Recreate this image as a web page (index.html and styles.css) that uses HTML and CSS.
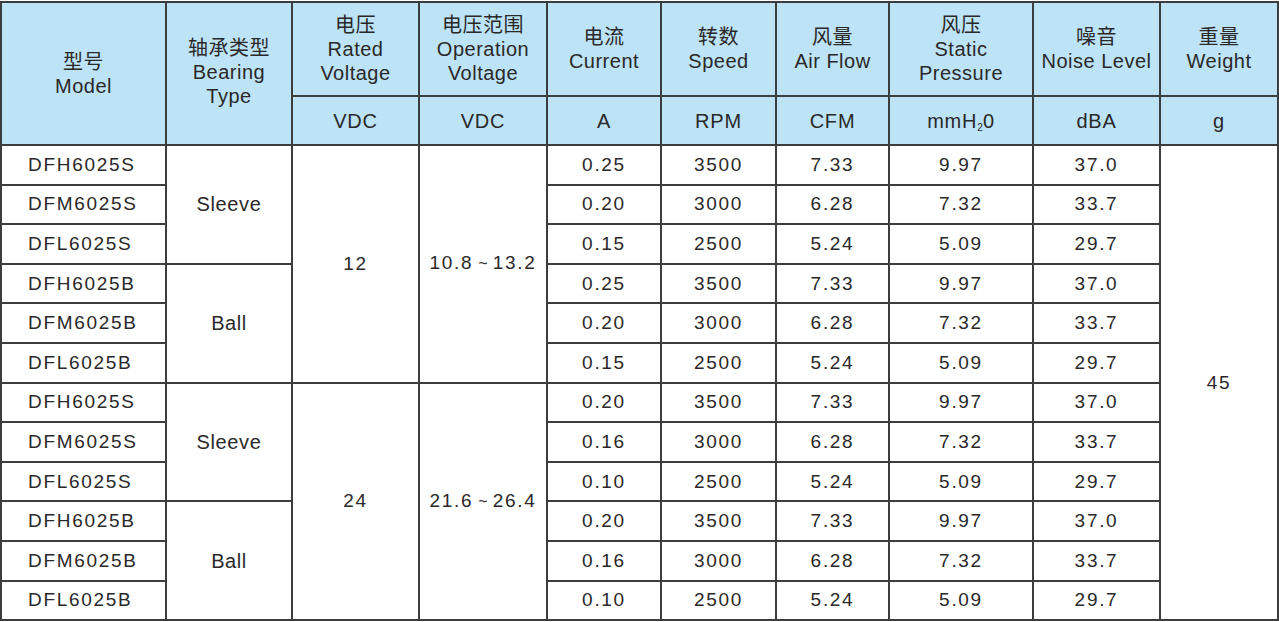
FILE: index.html
```html
<!DOCTYPE html>
<html lang="zh">
<head>
<meta charset="utf-8">
<title>Spec table</title>
<link rel="stylesheet" href="styles.css">
</head>
<body>
<table class="spec">
  <colgroup>
    <col class="c1"><col class="c2"><col class="c3"><col class="c4"><col class="c5">
    <col class="c6"><col class="c7"><col class="c8"><col class="c9"><col class="c10">
  </colgroup>
  <thead>
    <tr class="h1">
      <th rowspan="2">型号<br>Model</th>
      <th rowspan="2" class="up">轴承类型<br>Bearing<br>Type</th>
      <th>电压<br>Rated<br>Voltage</th>
      <th>电压范围<br>Operation<br>Voltage</th>
      <th>电流<br>Current</th>
      <th>转数<br>Speed</th>
      <th>风量<br>Air Flow</th>
      <th>风压<br>Static<br>Pressure</th>
      <th>噪音<br>Noise Level</th>
      <th>重量<br>Weight</th>
    </tr>
    <tr class="h2">
      <th>VDC</th><th>VDC</th><th>A</th><th>RPM</th><th>CFM</th>
      <th>mmH<sub>2</sub>0</th><th>dBA</th><th>g</th>
    </tr>
  </thead>
  <tbody>
    <tr><td>DFH6025S</td><td rowspan="3" class="word">Sleeve</td><td rowspan="6">12</td><td rowspan="6">10.8<span class="tilde">~</span>13.2</td><td>0.25</td><td>3500</td><td>7.33</td><td>9.97</td><td>37.0</td><td rowspan="12">45</td></tr>
    <tr><td>DFM6025S</td><td>0.20</td><td>3000</td><td>6.28</td><td>7.32</td><td>33.7</td></tr>
    <tr><td>DFL6025S</td><td>0.15</td><td>2500</td><td>5.24</td><td>5.09</td><td>29.7</td></tr>
    <tr><td>DFH6025B</td><td rowspan="3" class="word">Ball</td><td>0.25</td><td>3500</td><td>7.33</td><td>9.97</td><td>37.0</td></tr>
    <tr><td>DFM6025B</td><td>0.20</td><td>3000</td><td>6.28</td><td>7.32</td><td>33.7</td></tr>
    <tr><td>DFL6025B</td><td>0.15</td><td>2500</td><td>5.24</td><td>5.09</td><td>29.7</td></tr>
    <tr><td>DFH6025S</td><td rowspan="3" class="word">Sleeve</td><td rowspan="6">24</td><td rowspan="6">21.6<span class="tilde">~</span>26.4</td><td>0.20</td><td>3500</td><td>7.33</td><td>9.97</td><td>37.0</td></tr>
    <tr><td>DFM6025S</td><td>0.16</td><td>3000</td><td>6.28</td><td>7.32</td><td>33.7</td></tr>
    <tr><td>DFL6025S</td><td>0.10</td><td>2500</td><td>5.24</td><td>5.09</td><td>29.7</td></tr>
    <tr><td>DFH6025B</td><td rowspan="3" class="word">Ball</td><td>0.20</td><td>3500</td><td>7.33</td><td>9.97</td><td>37.0</td></tr>
    <tr><td>DFM6025B</td><td>0.16</td><td>3000</td><td>6.28</td><td>7.32</td><td>33.7</td></tr>
    <tr><td>DFL6025B</td><td>0.10</td><td>2500</td><td>5.24</td><td>5.09</td><td>29.7</td></tr>
  </tbody>
</table>
</body>
</html>
```

FILE: styles.css
```css
html, body {
  margin: 0;
  padding: 0;
  background: #ffffff;
}

body {
  padding-top: 1px;
}

.spec {
  border-collapse: collapse;
  table-layout: fixed;
  width: 1277px;
  font-family: "Liberation Sans", "Noto Sans CJK SC", Arial, sans-serif;
  font-size: 19px;
  color: #2b2829;
  letter-spacing: 1.7px;
  border: 2px solid #7a7a7a;
}

.c1 { width: 165px; }
.c2 { width: 126px; }
.c3 { width: 127px; }
.c4 { width: 128px; }
.c5 { width: 114px; }
.c6 { width: 115px; }
.c7 { width: 113px; }
.c8 { width: 144px; }
.c9 { width: 127px; }
.c10 { width: 118px; }

.spec th,
.spec td {
  border: 2px solid #3d3d3d;
  padding: 0;
  text-align: center;
  vertical-align: middle;
  font-weight: normal;
}

.spec th {
  background: #bde3f7;
  font-size: 20px;
  line-height: 24px;
  letter-spacing: 0.5px;
}

.spec .h1 th { height: 92px; }
.spec .h2 th { height: 47px; letter-spacing: 0.8px; }

.spec th.up { padding-bottom: 4px; }

.spec td {
  height: 37.6px;
  line-height: 22px;
}

.spec td.word {
  font-size: 20px;
  letter-spacing: 0.6px;
}

.spec tbody td:first-child {
  text-align: left;
  padding-left: 26px;
}

.spec sub {
  font-size: 10px;
  vertical-align: -3px;
  line-height: 0;
  letter-spacing: 0;
}

.tilde {
  font-size: 16px;
  letter-spacing: 0;
  padding: 0 5px;
}
```
